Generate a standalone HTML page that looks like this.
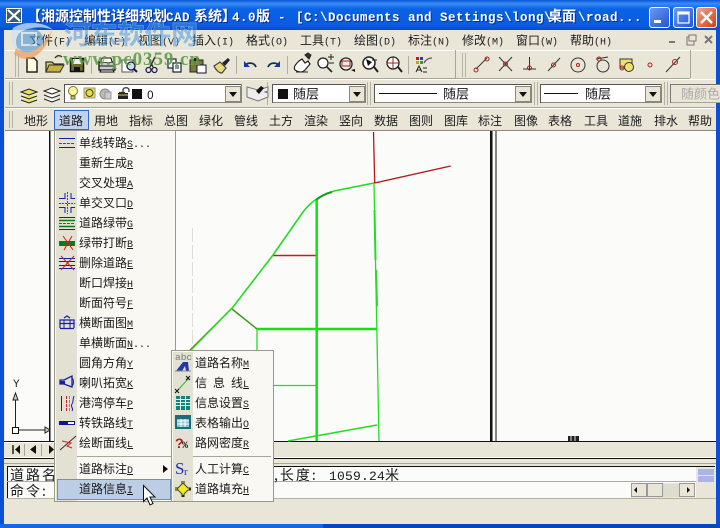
<!DOCTYPE html>
<html><head><meta charset="utf-8"><style>
html,body{margin:0;padding:0;background:#ece9d8}
svg{display:block;filter:blur(.35px)}
text{font-family:"WenQuanYi Zen Hei","Noto Sans CJK SC",sans-serif;font-size:12px;fill:#1a1a1a}
.u{font-family:"Liberation Mono",monospace;font-size:10px;text-decoration:underline}
.m{font-family:"Liberation Mono",monospace;font-size:10px}
.ti{font-size:14px;font-weight:bold;fill:#fff;filter:drop-shadow(1px 1px 0 #0a2f90)}
.tm{font-family:"Liberation Mono",monospace;font-size:12.5px;font-weight:bold;fill:#fff;letter-spacing:.5px;filter:drop-shadow(1px 1px 0 #0a2f90)}
.c{font-size:14px;letter-spacing:2px}
.cm{font-family:"Liberation Mono",monospace;font-size:13px;letter-spacing:.2px}
</style></head><body>
<svg width="720" height="528" viewBox="0 0 720 528" xmlns="http://www.w3.org/2000/svg">
<defs>
<linearGradient id="tb" x1="0" y1="0" x2="0" y2="1"><stop offset="0" stop-color="#0a57d8"/><stop offset=".12" stop-color="#3a8cf5"/><stop offset=".3" stop-color="#0a62e4"/><stop offset=".85" stop-color="#0a5ce0"/><stop offset="1" stop-color="#0a4cc8"/></linearGradient>
<linearGradient id="bb" x1="0" y1="0" x2="1" y2="1"><stop offset="0" stop-color="#6d9cf0"/><stop offset="1" stop-color="#1f52d8"/></linearGradient>
<linearGradient id="br" x1="0" y1="0" x2="1" y2="1"><stop offset="0" stop-color="#f0a890"/><stop offset="1" stop-color="#d23c10"/></linearGradient>
</defs>

<!-- window -->
<rect width="720" height="528" fill="#0a4fd4"/>
<rect x="4" y="30" width="712" height="494" fill="#e9e6d8"/>
<rect width="720" height="30" fill="url(#tb)"/>
<rect y="524" width="323" height="4" fill="#1467e8"/>
<rect x="323" y="524" width="397" height="4" fill="#0a46c0"/>

<!-- title -->
<rect x="6" y="8" width="16" height="15" fill="#fff"/>
<rect x="7" y="9" width="14" height="13" fill="#3b5a7a"/>
<path d="M8 10l12 11M20 10l-12 11" stroke="#fff" stroke-width="2.2"/>
<text class="ti" x="27" y="21">【</text>
<text class="ti" x="41" y="21">湘源控制性详细规划</text>
<text class="tm" x="166" y="21" letter-spacing="2">CAD</text>
<text class="ti" x="194" y="21">系统】</text>
<text class="tm" x="232" y="21">4.0</text>
<text class="ti" x="256" y="21">版</text>
<text class="tm" x="278" y="21">-</text>
<text class="tm" x="296" y="21">[C:\Documents and Settings\long\</text>
<text class="ti" x="548" y="21">桌面</text>
<text class="tm" x="578" y="21">\road...</text>

<rect x="649.500" y="7.500" width="20" height="20" rx="2.500" fill="url(#bb)" stroke="#fff"/>
<rect x="654" y="20" width="7" height="3" fill="#fff"/>
<rect x="673.500" y="7.500" width="20" height="20" rx="2.500" fill="url(#bb)" stroke="#fff"/>
<rect x="678" y="12" width="11" height="11" fill="none" stroke="#fff" stroke-width="1.200"/><rect x="678" y="12" width="11" height="2.500" fill="#fff"/>
<rect x="696.500" y="7.500" width="20" height="20" rx="2.500" fill="url(#br)" stroke="#fff"/>
<path d="M701 12l11 11M712 12l-11 11" stroke="#fff" stroke-width="2.400"/>

<!-- menu bar -->
<text x="29" y="44.500">文件<tspan class="m">(F)</tspan></text>
<text x="84" y="44.500">编辑<tspan class="m">(E)</tspan></text>
<text x="138" y="44.500">视图<tspan class="m">(V)</tspan></text>
<text x="192" y="44.500">插入<tspan class="m">(I)</tspan></text>
<text x="246" y="44.500">格式<tspan class="m">(O)</tspan></text>
<text x="300" y="44.500">工具<tspan class="m">(T)</tspan></text>
<text x="354" y="44.500">绘图<tspan class="m">(D)</tspan></text>
<text x="408" y="44.500">标注<tspan class="m">(N)</tspan></text>
<text x="462" y="44.500">修改<tspan class="m">(M)</tspan></text>
<text x="516" y="44.500">窗口<tspan class="m">(W)</tspan></text>
<text x="570" y="44.500">帮助<tspan class="m">(H)</tspan></text>
<rect x="669" y="41" width="6" height="2" fill="#777"/>
<rect x="687" y="37" width="7" height="8" fill="none" stroke="#777"/><rect x="689" y="35" width="7" height="6" fill="#e9e6d8" stroke="#777"/>
<path d="M705 36l7 7M712 36l-7 7" stroke="#777" stroke-width="2"/>

<!-- toolbar borders -->
<path d="M5 50.500H715" stroke="#fff"/>
<path d="M5 78.500H690" stroke="#a8a695"/>
<path d="M5 79.500H715" stroke="#fff"/>
<path d="M5 107.500H715" stroke="#a8a695"/>
<path d="M5 108.500H715" stroke="#fff"/>
<path d="M455.500 50V78M690.500 50V78" stroke="#a8a695"/>
<path d="M15.500 53V77M18.500 53V77M9.500 82V105M12.500 82V105M9.500 111V128M12.500 111V128M462.500 53V77M465.500 53V77M367.500 82V105M370.500 82V105M534.500 82V105M537.500 82V105M664.500 82V105M667.500 82V105M267.500 82V105" stroke="#b5b3a3" stroke-width="1"/>
<path d="M91.500 56V74M236.500 56V74M287.500 56V74M408.500 56V74" stroke="#b0ae9e"/>

<!-- toolbar 1 icons -->
<path d="M27 58h7l3 3v11H27z" fill="#fffde0" stroke="#222" stroke-width="1.500"/>
<path d="M46 72V62h6l2 2h9l-3 8zM55 58c2-3 5-3 7-1" fill="#d8c860" stroke="#332" stroke-width="1.300"/>
<path d="M46 72l3-7h15l-4 7z" fill="#c9b040" stroke="#332"/>
<rect x="70.500" y="58.500" width="13" height="13" fill="#6b6b30" stroke="#111" stroke-width="1.500"/><rect x="73" y="59" width="8" height="5" fill="#eee"/><rect x="74" y="67" width="6" height="4" fill="#111"/>
<path d="M99 62h14l2 3v5H99z" fill="#ccc" stroke="#111" stroke-width="1.300"/><path d="M101 62l1-4h9l1 4M101 70h12l1 2h-14z" fill="#fff" stroke="#111"/><path d="M99 66h16" stroke="#111"/>
<rect x="122" y="60" width="11" height="12" fill="#fff" stroke="#555"/><circle cx="131" cy="66" r="4" fill="#cde" stroke="#123" stroke-width="1.300"/><path d="M134 69l3 3" stroke="#124" stroke-width="2"/>
<path d="M148 57l5 10M155 57l-5 10" stroke="#333" stroke-width="1.500"/><circle cx="148.500" cy="70" r="2.500" fill="none" stroke="#224" stroke-width="1.300"/><circle cx="154.500" cy="70" r="2.500" fill="none" stroke="#224" stroke-width="1.300"/>
<rect x="168" y="59" width="8" height="9" fill="#fff" stroke="#123" stroke-width="1.200"/><rect x="173" y="63" width="8" height="9" fill="#fff" stroke="#123" stroke-width="1.200"/><path d="M175 66h4M175 68h4" stroke="#123"/>
<rect x="190" y="60" width="13" height="12" fill="#7a7a3a" stroke="#222"/><rect x="194" y="58" width="5" height="3" fill="#222"/><rect x="197" y="65" width="9" height="8" fill="#fff" stroke="#113"/>
<path d="M214 66l6-4 6 6-4 5c-3 0-6-3-8-7z" fill="#e8d880" stroke="#443" stroke-width="1.200"/><path d="M222 63l6-5 2 2-5 6z" fill="#223"/>
<path d="M245 66c2-4 9-4 11 1" fill="none" stroke="#134" stroke-width="1.800"/><path d="M244 61v6h6z" fill="#1838a0"/>
<path d="M268 67c2-5 9-5 11-1" fill="none" stroke="#134" stroke-width="1.800"/><path d="M280 61v6h-6z" fill="#1838a0"/>
<path d="M295 70c-2-3 1-6 4-9l3-2 3 4 3-2 2 3-5 6c-3 3-7 2-10 0z" fill="#fff" stroke="#222" stroke-width="1.200"/><path d="M305 55l4 4 2-4-3-2zM296 72h12" stroke="#222" fill="#333"/>
<circle cx="323" cy="63" r="5" fill="#fff" stroke="#222" stroke-width="1.300"/><path d="M327 67l5 5" stroke="#222" stroke-width="1.600"/><path d="M328 57h6M331 54v6M329 63h5" stroke="#222"/>
<circle cx="346" cy="64" r="6" fill="#f4e8e8" stroke="#222" stroke-width="1.300"/><rect x="342" y="61" width="8" height="5" fill="none" stroke="#a02020"/><path d="M351 70l4 2v-3z" fill="#111"/>
<circle cx="369" cy="63" r="6" fill="#fff" stroke="#222" stroke-width="1.500"/><path d="M366 59l6 3-4 4z" fill="#111"/><path d="M374 67l4 5" stroke="#222" stroke-width="2"/><path d="M372 60h5" stroke="#222"/>
<circle cx="393" cy="63" r="6" fill="#fff" stroke="#222" stroke-width="1.300"/><path d="M387 63h12M393 57v12" stroke="#a02020"/><path d="M398 67l4 5" stroke="#222" stroke-width="2"/>
<rect x="416" y="57" width="3" height="3" fill="#c02020"/><rect x="420" y="57" width="3" height="3" fill="#2040c0"/><rect x="416" y="61" width="3" height="3" fill="#c0a020"/><rect x="420" y="61" width="3" height="3" fill="#20a040"/>
<path d="M424 63c2-4 5-5 8-5" stroke="#555" stroke-width="1.300" fill="none"/>
<path d="M416 72l3-6 3 6M417 70h4M423 68h4M423 72h4" stroke="#222" fill="none"/>

<!-- osnap icons -->
<g fill="none" stroke="#333" stroke-width="1">
<path d="M476 69l11-11"/><circle cx="476" cy="70" r="2" stroke="#b02020"/><circle cx="487" cy="59" r="2" stroke="#b02020"/>
<path d="M499 57l13 14M512 57l-13 14"/><circle cx="505.500" cy="64" r="2" stroke="#b02020"/>
<path d="M523 69h13M529.500 57v12"/><circle cx="529.500" cy="68" r="2" stroke="#b02020"/>
<path d="M548 71l12-13"/><circle cx="553.500" cy="65" r="2" stroke="#b02020"/>
<circle cx="578" cy="65" r="7"/><circle cx="578" cy="65" r="1.500" stroke="#b02020"/>
<circle cx="603" cy="66" r="6"/><path d="M596 59l12-2"/><circle cx="599" cy="59" r="2" stroke="#b02020"/>
<rect x="620" y="59" width="12" height="9" fill="#f0e070"/><circle cx="629" cy="67" r="4.500" fill="#f0e070"/><circle cx="622" cy="68" r="2" stroke="#b02020"/>
<circle cx="650" cy="65" r="2" stroke="#b02020"/>
<path d="M666 72l14-15"/><circle cx="675" cy="62" r="2.500" stroke="#b02020"/>
</g>

<!-- toolbar 2 -->
<path d="M21 92l8-3 8 3-8 3zM21 96l8 3 8-3M21 100l8 3 8-3" fill="#e8e060" stroke="#222"/>
<path d="M44 91l8-3 8 3-8 3zM44 95l8 3 8-3M44 99l8 3 8-3" fill="#fff" stroke="#222"/>

<g stroke-width="1">
<rect x="64.500" y="84.500" width="177" height="18" fill="#fff" stroke="#8a8878"/>
<path d="M64.500 103V84.500H241" stroke="#555" fill="none"/>
<rect x="272.500" y="84.500" width="93" height="18" fill="#fff" stroke="#8a8878"/>
<path d="M272.500 103V84.500H365" stroke="#555" fill="none"/>
<rect x="374.500" y="84.500" width="157" height="18" fill="#fff" stroke="#8a8878"/>
<path d="M374.500 103V84.500H531" stroke="#555" fill="none"/>
<rect x="540.500" y="84.500" width="121" height="18" fill="#fff" stroke="#8a8878"/>
<path d="M540.500 103V84.500H661" stroke="#555" fill="none"/>
<rect x="670.500" y="84.500" width="60" height="18" fill="#e9e6d8" stroke="#a8a695"/>
<path d="M670.500 103V84.500H720" stroke="#777" fill="none"/>
</g>
<g fill="#e9e6d8" stroke="#8a8878">
<rect x="225.500" y="86.500" width="15" height="15"/><rect x="349.500" y="86.500" width="15" height="15"/><rect x="515.500" y="86.500" width="15" height="15"/><rect x="645.500" y="86.500" width="15" height="15"/>
</g>
<g fill="#111"><path d="M229 92h8l-4 5z"/><path d="M353 92h8l-4 5z"/><path d="M519 92h8l-4 5z"/><path d="M649 92h8l-4 5z"/></g>

<!-- layer icons -->
<circle cx="73" cy="91" r="4.500" fill="#fff8a0" stroke="#887020"/><path d="M71 96h4v3h-4z" fill="#dcc860" stroke="#665"/>
<rect x="84" y="88" width="11" height="10" fill="#e8e040" stroke="#999"/><circle cx="89.500" cy="93" r="3.500" fill="none" stroke="#443"/>
<circle cx="105" cy="94" r="5" fill="#bbb" stroke="#888"/><rect x="105" y="92" width="6" height="7" fill="#ccc" stroke="#999"/>
<rect x="118" y="93" width="10" height="6" fill="#222"/><path d="M119 92.500h6M123 93v-3c0-3 6-3 6 0v2" stroke="#333" stroke-width="1.300" fill="none"/><path d="M118 95h10" stroke="#e0d040"/>
<rect x="132" y="89" width="10" height="10" fill="#111"/>
<text x="147" y="99" font-size="13">0</text>
<path d="M247 87l11 3 10-3v4l-3 1 3 1v4l-10 4-11-4z" fill="#eee" stroke="#777"/><path d="M256 91l5-5 3 2-5 6z" fill="#111"/>
<rect x="278" y="89" width="10" height="10" fill="#111"/>
<text x="293" y="98.500" style="font-size:13px">随层</text>
<path d="M379 93.500h58" stroke="#111"/>
<text x="443" y="98.500" style="font-size:13px">随层</text>
<path d="M544 93.500h34" stroke="#111"/>
<text x="585" y="98.500" style="font-size:13px">随层</text>
<text x="681" y="98.500" style="font-size:13px;fill:#aaa">随颜色</text>

<!-- toolbar 3 -->
<rect x="54.500" y="110.500" width="34" height="19" fill="#c1d2ee" stroke="#316ac5"/>
<g>
<text x="24" y="125">地形</text><text x="59" y="125">道路</text><text x="94" y="125">用地</text><text x="129" y="125">指标</text><text x="164" y="125">总图</text><text x="199" y="125">绿化</text><text x="234" y="125">管线</text><text x="269" y="125">土方</text><text x="304" y="125">渲染</text><text x="339" y="125">竖向</text><text x="374" y="125">数据</text><text x="409" y="125">图则</text><text x="444" y="125">图库</text><text x="478" y="125">标注</text><text x="514" y="125">图像</text><text x="548" y="125">表格</text><text x="584" y="125">工具</text><text x="618" y="125">道施</text><text x="654" y="125">排水</text><text x="688" y="125">帮助</text>
</g>

<!-- canvas -->
<rect x="5" y="131" width="711" height="310" fill="#fbfbfa"/>
<path d="M5 130.500H716" stroke="#8a8878"/>
<path d="M4 441.500H716" stroke="#111"/>
<rect x="49" y="131" width="1.500" height="312" fill="#111"/>
<rect x="490" y="131" width="2.500" height="310" fill="#111"/>
<rect x="495.500" y="131" width="1" height="310" fill="#111"/>
<path d="M192.500 228V350" stroke="#ddd" stroke-dasharray="14 3"/>
<rect x="568" y="436" width="11" height="5" fill="#222"/><path d="M571 436v5M575 436v5" stroke="#ddd"/>
<g fill="none">
<path d="M373.500 132L374.700 183L450.700 166" stroke="#b01818" stroke-width="1.300"/>
<path d="M190 350L232 308" stroke="#a01818" stroke-width="1.200"/>
<path d="M273 255.500H316" stroke="#d01818" stroke-width="1.400"/>
<path d="M232 309L257 329" stroke="#3f9a18" stroke-width="1.500"/>
<path d="M190 351L233 307L273 255L303 212C312 200 322 195 334 191L374 183" stroke="#22dd22" stroke-width="1.600"/>
<path d="M316 200C322 195 328 193 332 192" stroke="#1a9a1a" stroke-width="2"/>
<path d="M316.700 200V441" stroke="#14e014" stroke-width="2.500"/>
<path d="M257 329H377" stroke="#14e014" stroke-width="2.500"/>
<path d="M257 329V441" stroke="#22dd22" stroke-width="1.300"/>
<path d="M273 385.500H316" stroke="#22dd22" stroke-width="1.300"/>
<path d="M374 183L379 441" stroke="#22dd22" stroke-width="1.300"/>
<path d="M374.500 210L375.500 260M376 270L377 306" stroke="#22dd22" stroke-width="2"/>
<path d="M288 441L377 425" stroke="#22dd22" stroke-width="1.600"/>
</g>

<!-- axis -->
<path d="M15.500 398V430H47" stroke="#222" fill="none"/>
<rect x="12.500" y="427.500" width="6" height="6" fill="#fff" stroke="#111"/>
<path d="M15.500 393l-2.500 7h5z" fill="#ccc" stroke="#222"/>
<path d="M45 427v6l5-3z" fill="#ccc" stroke="#222"/>
<text x="13" y="387" class="m" style="font-size:11px">Y</text>

<!-- tab scroll -->
<rect x="5" y="443" width="50" height="13" fill="#e9e6d8"/>
<path d="M4 442.500H55" stroke="#fff"/>
<path d="M13 445v9" stroke="#111" stroke-width="1.400"/><path d="M20 445v9l-5-4.500z" fill="#111"/>
<path d="M36 445v9l-6-4.500z" fill="#111"/><path d="M49 445v9l5-4.500z" fill="#111"/>
<path d="M24.500 444V456M41.500 444V456" stroke="#a8a695"/>

<!-- command area -->
<path d="M4 457.500H716" stroke="#fff"/>
<path d="M4 458.500H716" stroke="#111"/>
<path d="M4 463.500H716" stroke="#a8a695"/>
<rect x="7" y="467" width="689" height="31" fill="#fbfbfa"/>
<path d="M7 466.500H715" stroke="#111"/>
<path d="M7.500 466V498" stroke="#111"/>
<path d="M7 481.500H696" stroke="#aaa"/>
<path d="M7 498.500H716" stroke="#b5b3a3"/>
<path d="M696 467H716V498H696z" fill="#e9e6d8"/>
<rect x="698" y="469" width="16" height="6" fill="#aab6e2"/>
<rect x="698" y="476" width="16" height="6" fill="#aab6e2"/>
<text class="c" x="10" y="480">道路名</text>
<text class="c" x="10" y="496">命令:</text>
<text class="c" x="258" y="480">米,长度:</text>
<text class="cm" x="329" y="480">1059.24</text>
<text class="c" x="385" y="480">米</text>

<rect x="631" y="483" width="64" height="15" fill="#e8e6d8"/>
<rect x="663" y="484" width="16" height="13" fill="#dedccd"/>
<rect x="631.500" y="483.500" width="15" height="13" fill="#e9e6d8" stroke="#999"/>
<rect x="647.500" y="483.500" width="15" height="13" fill="#e9e6d8" stroke="#999"/>
<rect x="679.500" y="483.500" width="15" height="13" fill="#e9e6d8" stroke="#999"/>
<path d="M637 487v6l-3-3z" fill="#111"/><path d="M687 487v6l3-3z" fill="#111"/>

<!-- main menu -->
<rect x="54.500" y="130.500" width="121" height="371" fill="#f9f8f3" stroke="#9a9888"/>
<rect x="56" y="131" width="21" height="370" fill="#e3e1d3"/>
<path d="M77 456.500H174" stroke="#a8a695"/>
<rect x="57.500" y="479.500" width="113" height="20" fill="#bccde6" stroke="#6f8fc0"/>
<g>
<text x="79" y="147">单线转路<tspan class="u">S</tspan><tspan class="m">...</tspan></text>
<text x="79" y="167">重新生成<tspan class="u">R</tspan></text>
<text x="79" y="187">交叉处理<tspan class="u">A</tspan></text>
<text x="79" y="207">单交叉口<tspan class="u">D</tspan></text>
<text x="79" y="227">道路绿带<tspan class="u">G</tspan></text>
<text x="79" y="247">绿带打断<tspan class="u">B</tspan></text>
<text x="79" y="267">删除道路<tspan class="u">E</tspan></text>
<text x="79" y="287">断口焊接<tspan class="u">H</tspan></text>
<text x="79" y="307">断面符号<tspan class="u">F</tspan></text>
<text x="79" y="327">横断面图<tspan class="u">M</tspan></text>
<text x="79" y="347">单横断面<tspan class="u">N</tspan><tspan class="m">...</tspan></text>
<text x="79" y="367">圆角方角<tspan class="u">Y</tspan></text>
<text x="79" y="387">喇叭拓宽<tspan class="u">K</tspan></text>
<text x="79" y="407">港湾停车<tspan class="u">P</tspan></text>
<text x="79" y="427">转铁路线<tspan class="u">T</tspan></text>
<text x="79" y="447">绘断面线<tspan class="u">L</tspan></text>
<text x="79" y="473">道路标注<tspan class="u">D</tspan></text>
<text x="79" y="493">道路信息<tspan class="u">I</tspan></text>
</g>
<path d="M163 465v8l5-4z" fill="#111"/>

<!-- main menu icons -->
<g fill="none" stroke-width="1">
<path d="M59 138.500H75M59 147.500H75" stroke="#1420a0"/><path d="M59 143.500H75" stroke="#c02020" stroke-dasharray="3 1"/>
<path d="M59 198.500H65V193M71 193V198.500H75M59 207.500H65V213M71 213V207.500H75" stroke="#1420a0"/><path d="M59 203.500H75M67.500 192V214" stroke="#c02020" stroke-dasharray="2 1"/>
<path d="M59 217.500H75M59 229.500H75" stroke="#1420a0"/><path d="M59 220.500H75M59 226.500H75" stroke="#0a7a20" stroke-width="1.600"/><path d="M59 223.500H75" stroke="#c02020" stroke-dasharray="3 1"/>
<rect x="59" y="241" width="16" height="5" fill="#0a7a20"/><path d="M63 236l10 14M72 236l-8 14" stroke="#d02020"/>
<path d="M59 258.500H75M59 261.500H75M59 265.500H75M59 268.500H75" stroke="#1420a0"/><path d="M61 256l13 14M74 256l-13 14" stroke="#d02020"/>
<path d="M60 328V320H74V328M60 323.500H74M60 328.500H74M64 318l3-2 3 2" stroke="#1420a0" stroke-width="1.200"/><path d="M64 320v8M70 320v8" stroke="#1420a0"/>
<path d="M60 380h4l8-4v11l-8-3h-4z" stroke="#1420a0" stroke-width="1.300"/><rect x="60" y="381" width="5" height="3" fill="#1420a0"/><path d="M72 378c2 2 2 6 0 8" stroke="#1420a0"/>
<path d="M61.500 396V411M74 396c-2 5 0 5-2 8s2 4 0 7" stroke="#1420a0"/><path d="M66.500 396V411" stroke="#c02020" stroke-dasharray="3 1"/><path d="M69.500 396V411" stroke="#c08020" stroke-dasharray="3 1"/>
<rect x="59" y="421" width="16" height="4" fill="#101888"/><rect x="68" y="422" width="6" height="2" fill="#fff"/>
<path d="M60 450L76 436" stroke="#333"/><path d="M62 441l9 2-4 3 5 2" stroke="#d02020"/>
</g>

<!-- submenu -->
<rect x="171.500" y="350.500" width="102" height="151" fill="#f9f8f3" stroke="#9a9888"/>
<rect x="173" y="352" width="20" height="149" fill="#e3e1d3"/>
<path d="M193 456.500H271" stroke="#a8a695"/>
<g>
<text x="195" y="367">道路名称<tspan class="u">M</tspan></text>
<text x="195" y="387">信</text><text x="213" y="387">息</text><text x="231" y="387">线<tspan class="u">L</tspan></text>
<text x="195" y="407">信息设置<tspan class="u">S</tspan></text>
<text x="195" y="427">表格输出<tspan class="u">O</tspan></text>
<text x="195" y="447">路网密度<tspan class="u">R</tspan></text>
<text x="195" y="473">人工计算<tspan class="u">C</tspan></text>
<text x="195" y="493">道路填充<tspan class="u">H</tspan></text>
</g>
<text x="175" y="360" class="m" style="font-size:9.500px;fill:#777">abc</text>
<path d="M176 371l7-9h5l1 9h-3l-1-5-3 5z" fill="#2438a8"/><path d="M175 371h16" stroke="#888"/>
<path d="M177 391l12-13" stroke="#20c020"/><path d="M175 389l4 4M179 389l-4 4M186 376l4 4M190 376l-4 4" stroke="#111"/>
<rect x="176" y="396" width="14" height="14" fill="#16807a"/>
<path d="M176 399.500h14M176 402.500h14M176 405.500h14M180.500 396v14M185.500 396v14" stroke="#cfe" stroke-width="1"/>
<rect x="175" y="415" width="16" height="14" fill="#16707a"/><rect x="177" y="419" width="12" height="8" fill="#8ec0d0"/><path d="M177 421h12M177 424h12M181 419v8M185 419v8" stroke="#fff"/>
<text x="175" y="448" style="font-size:14px;font-weight:bold;fill:#c01818;font-family:'Liberation Sans',sans-serif">?</text><text x="182" y="448" class="m" style="font-size:10px;font-weight:bold">%</text>
<text x="175" y="474" style="font-family:'Liberation Serif',serif;font-size:17px;fill:#1830b8">S</text><text x="184" y="475" style="font-family:'Liberation Serif',serif;font-size:11px;fill:#1830b8">r</text>
<path d="M183 481v16M175 489h16" stroke="#222" stroke-width="3"/>
<path d="M183 483l6 6-6 6-6-6z" fill="#f0ee20" stroke="#443" stroke-width="1"/>
<path d="M175 489h16M183 481v16" stroke="#f0ee20" stroke-width="1" stroke-dasharray="2 2"/>

<!-- cursor -->
<path d="M143.500 485.500V501.500L147 498L150 505L153 503.500L150 497H155Z" fill="#fff" stroke="#111"/>

<!-- watermark -->
<g opacity=".75">
<circle cx="30" cy="42" r="14" fill="#4a90d0" opacity=".8"/>
<path d="M13 28C25 20 45 22 53 30C44 26 28 26 18 34C12 40 16 50 22 50C16 52 8 42 13 28Z" fill="#cfe4f5"/>
<path d="M16 48C28 58 42 50 52 30C48 50 30 68 14 54Z" fill="#f0a060"/>
<rect x="22" y="33" width="14" height="12" fill="none" stroke="#cfe4f5" stroke-width="2"/>
</g>
<text x="64" y="44" textLength="134" lengthAdjust="spacingAndGlyphs" style="font-family:'Noto Sans CJK SC',sans-serif;font-size:26px;font-weight:bold;fill:#3f94e0;stroke:#e8f2fa;stroke-width:1;paint-order:stroke" opacity=".5">河东软件网</text>
<text x="63" y="65" textLength="137" style="font-family:'Liberation Serif',serif;font-size:19px;font-weight:bold;fill:#5f9c48" opacity=".9">www.pc0359.cn</text>
</svg>
</body></html>
